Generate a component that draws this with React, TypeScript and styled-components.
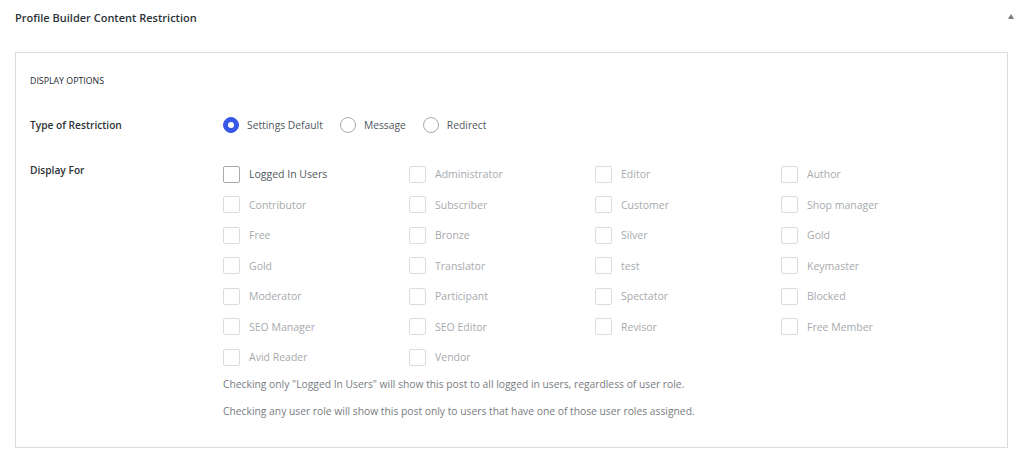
import React from "react";
import styled, { createGlobalStyle } from "styled-components";

const Global = createGlobalStyle`
  html, body { margin: 0; padding: 0; background: #fff; }
  body { font-family: "Open Sans", "Noto Sans", Arial, sans-serif; color: #3c434a; }
  * { box-sizing: border-box; }
`;

const Page = styled.div`
  width: 1024px;
  height: 462px;
  overflow: hidden;
  background: #fff;
`;

const Header = styled.div`
  height: 34px;
  display: flex;
  align-items: center;
  justify-content: space-between;
  padding: 0 10px 0 15px;
`;

const Title = styled.h2`
  margin: 0;
  font-size: 11px;
  font-weight: 600;
  color: #2c3338;
  letter-spacing: 0;
`;

const Toggle = styled.span`
  width: 0;
  height: 0;
  border-left: 3.5px solid transparent;
  border-right: 3.5px solid transparent;
  border-bottom: 5px solid #787c82;
  margin-top: -2px;
`;

const Card = styled.div`
  margin: 18px 16px 0 15px;
  border: 1px solid #dcdcde;
  padding: 0 14px 26px;
  display: flex;
  flex-direction: column;
`;

const SectionTitle = styled.div`
  margin-top: 21px;
  font-size: 8.8px;
  line-height: 14px;
  text-transform: uppercase;
  color: #23282d;
`;

const Row = styled.div<{ $top: number }>`
  display: grid;
  grid-template-columns: 193px 1fr;
  margin-top: ${(p) => p.$top}px;
`;

const Label = styled.div<{ $pad?: number }>`
  font-size: 10.2px;
  font-weight: 600;
  line-height: 20px;
  padding-top: ${(p) => p.$pad ?? 0}px;
  color: #2c3338;
`;

const RadioGroup = styled.div`
  display: flex;
  align-items: center;
  height: 20px;
`;

const RadioItem = styled.label`
  display: flex;
  align-items: center;
  margin-right: 17px;
  font-size: 10.3px;
  color: #50575e;
`;

const RadioDot = styled.span<{ $checked?: boolean }>`
  width: 16px;
  height: 16px;
  border-radius: 50%;
  margin-right: 8px;
  display: flex;
  align-items: center;
  justify-content: center;
  background: ${(p) => (p.$checked ? "#3858e9" : "#fff")};
  border: 1px solid ${(p) => (p.$checked ? "#3858e9" : "#a7aaad")};
  &::after {
    content: "";
    width: 6px;
    height: 6px;
    border-radius: 50%;
    background: #fff;
    display: ${(p) => (p.$checked ? "block" : "none")};
  }
`;

const Field = styled.div`
  display: flex;
  flex-direction: column;
`;

const CheckGrid = styled.div`
  display: grid;
  grid-template-columns: repeat(4, 186px);
  grid-auto-rows: 30.5px;
`;

const CheckItem = styled.label<{ $active?: boolean }>`
  display: flex;
  align-items: center;
  font-size: 10.5px;
  color: ${(p) => (p.$active ? "#50575e" : "#a7aaad")};
`;

const Box = styled.span<{ $active?: boolean }>`
  width: 17px;
  height: 17px;
  border-radius: 2px;
  border: 1px solid ${(p) => (p.$active ? "#a7aaad" : "#dcdcde")};
  margin-right: 9px;
  flex: none;
`;

const Help = styled.p<{ $top: number }>`
  margin: ${(p) => p.$top}px 0 0;
  font-size: 10.3px;
  line-height: 20px;
  color: #787c82;
`;

const roles = [
  "Logged In Users", "Administrator", "Editor", "Author",
  "Contributor", "Subscriber", "Customer", "Shop manager",
  "Free", "Bronze", "Silver", "Gold",
  "Gold", "Translator", "test", "Keymaster",
  "Moderator", "Participant", "Spectator", "Blocked",
  "SEO Manager", "SEO Editor", "Revisor", "Free Member",
  "Avid Reader", "Vendor",
];

export default function App() {
  return (
    <Page>
      <Global />
      <Header>
        <Title>Profile Builder Content Restriction</Title>
        <Toggle />
      </Header>
      <Card>
        <SectionTitle>Display Options</SectionTitle>
        <Row $top={27}>
          <Label>Type of Restriction</Label>
          <RadioGroup>
            <RadioItem><RadioDot $checked />Settings Default</RadioItem>
            <RadioItem><RadioDot />Message</RadioItem>
            <RadioItem><RadioDot />Redirect</RadioItem>
          </RadioGroup>
        </Row>
        <Row $top={24}>
          <Label $pad={1}>Display For</Label>
          <Field>
            <CheckGrid>
              {roles.map((r, i) => (
                <CheckItem key={i} $active={i === 0}>
                  <Box $active={i === 0} />
                  {r}
                </CheckItem>
              ))}
            </CheckGrid>
            <Help $top={1}>
              Checking only "Logged In Users" will show this post to all logged in users, regardless of user role.
            </Help>
            <Help $top={7}>
              Checking any user role will show this post only to users that have one of those user roles assigned.
            </Help>
          </Field>
        </Row>
      </Card>
    </Page>
  );
}
